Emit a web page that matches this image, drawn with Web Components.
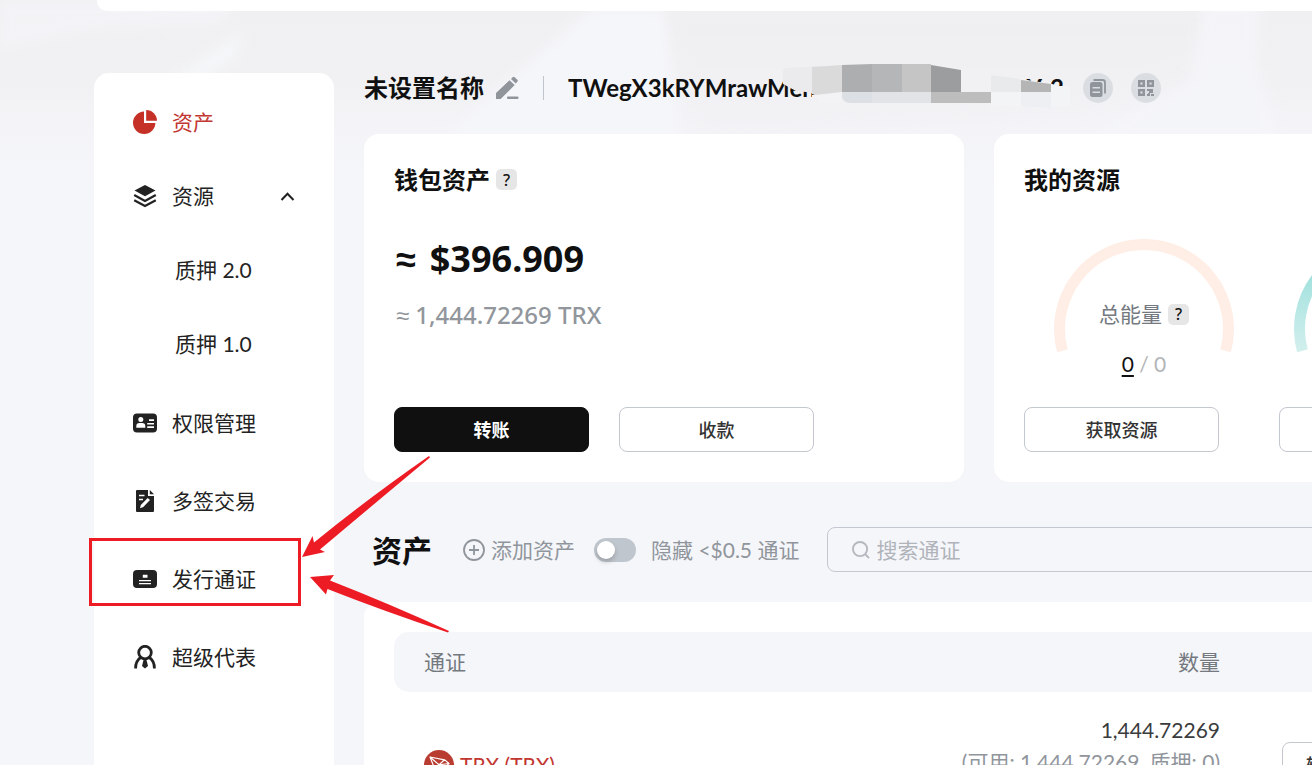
<!DOCTYPE html>
<html lang="zh-CN">
<head>
<meta charset="utf-8">
<meta name="viewport" content="width=device-width, initial-scale=1">
<title>钱包资产</title>
<style>
  html, body { margin: 0; background: #f5f6fa; }
  body { font-family: Lato, "Noto Sans CJK SC", sans-serif; font-size: 21px; line-height: 30px; color: #232323; }
</style>
</head>
<body>
<wallet-page></wallet-page>
<script>
const define = (name, markup) => {
  const tpl = document.createElement('template');
  tpl.innerHTML = markup;
  customElements.define(name, class extends HTMLElement {
    constructor() {
      super();
      this.attachShadow({ mode: 'open' }).append(tpl.content.cloneNode(true));
    }
  });
};

/* Page backdrop: pale folded-paper shapes fading into the page colour */
define('page-backdrop', `
<style>
  :host { position: absolute; inset: 0 0 auto 0; height: 240px; z-index: 0; }
  svg { display: block; width: 100%; height: 100%; }
</style>
<svg viewBox="0 0 1312 240" preserveAspectRatio="none" aria-hidden="true">
  <defs>
    <linearGradient id="f" x1="0" y1="0" x2="0" y2="1">
      <stop offset="0" stop-color="#f0f0f2"/><stop offset=".35" stop-color="#f1f1f3"/>
      <stop offset=".85" stop-color="#f5f6fa" stop-opacity="0"/>
    </linearGradient>
    <linearGradient id="g" x1="0" y1="0" x2="0" y2="1">
      <stop offset="0" stop-color="#efeff1"/><stop offset="1" stop-color="#f3f3f6"/>
    </linearGradient>
    <filter id="b"><feGaussianBlur stdDeviation="6"/></filter>
  </defs>
  <rect width="1312" height="240" fill="url(#f)"/>
  <polygon points="0,0 240,0 220,24 90,30 0,50" fill="#f5f6fa" opacity=".6" filter="url(#b)"/>
  <polygon points="245,30 235,58 200,80 170,80" fill="#f5f7f9" opacity=".9" filter="url(#b)"/>
  <polygon points="590,10 665,10 680,140 440,140 520,70" fill="#f5f6fa" filter="url(#b)"/>
  <polygon points="668,10 1200,10 1200,60 1075,110 700,140 690,100" fill="url(#g)" opacity=".8" filter="url(#b)"/>
  <polygon points="1205,0 1260,0 1256,60 1280,140 1080,140 1190,80" fill="#f5f6fa" opacity=".8" filter="url(#b)"/>
</svg>`);

define('help-badge', `
<style>
  :host { display: inline-flex; }
  button { width: 21px; height: 21px; padding: 0; border: 0; border-radius: 5px; background: #e6e6e6; color: #111; font: 500 16px/20px "Noto Sans", sans-serif; }
</style>
<button type="button" aria-label="说明">?</button>`);

define('action-button', `
<style>
  :host { display: block; width: 195px; flex: none; }
  button { width: 100%; height: 45px; padding: 0; border: 1px solid #c3c7cf; border-radius: 8px; background: #fff; color: #333; font: 500 18px/26px Lato, "Noto Sans CJK SC", sans-serif; }
  :host([primary]) button { background: #101010; border-color: #101010; color: #fff; font-weight: 700; }
</style>
<button type="button"><slot></slot></button>`);

define('panel-card', `
<style>
  :host { display: block; background: #fff; border-radius: 15px; padding: 30px; }
</style>
<slot></slot>`);

/* Menu */
define('menu-item', `
<style>
  :host { display: block; }
  a { display: flex; align-items: center; gap: 15px; height: 78px; padding: 0 39px; color: inherit; text-decoration: none; }
  :host([short]) a { height: 74px; }
  :host([sub]) a { padding-left: 81px; }
  :host([active]) a { color: #c23631; }
  .label { flex: 1; }
  ::slotted(svg) { display: block; flex: none; }
</style>
<a href="#"><slot name="icon"></slot><span class="label"><slot></slot></span><slot name="end"></slot></a>`);

define('side-menu', `
<style>
  :host { display: block; width: 240px; flex: none; background: #fff; border-radius: 15px; }
  nav { padding: 12px 0; }
  .group { padding-bottom: 3px; }
</style>
<nav aria-label="主菜单">
  <div class="group">
    <menu-item short active>
      <svg slot="icon" width="24" height="24" viewBox="0 0 24 24" fill="#c53027"><path d="M11 1.6A11.2 11.2 0 1 0 22.4 13H11Z"/><path d="M13.2 0A10.8 10.8 0 0 1 24 10.8H13.2Z"/></svg>
      资产</menu-item>
    <menu-item short>
      <svg slot="icon" width="24" height="24" viewBox="0 0 24 24"><path d="M12 1 22.500 6.500 12 12.200 1.500 6.500Z" fill="#222"/><path d="M1.200 11 12 17 22.800 11M1.200 16.200 12 22 22.800 16.200" fill="none" stroke="#222" stroke-width="2.200"/></svg>
      资源
      <svg slot="end" width="15" height="15" viewBox="0 0 15 15"><path d="M1.500 11 7.500 4.800 13.500 11" fill="none" stroke="#222" stroke-width="2"/></svg>
    </menu-item>
    <menu-item short sub>质押 2.0</menu-item>
    <menu-item short sub>质押 1.0</menu-item>
  </div>
  <menu-item>
    <svg slot="icon" width="24" height="24" viewBox="0 0 24 24"><rect y="2.500" width="24" height="19" rx="4" fill="#222"/><circle cx="7.800" cy="8.500" r="2.500" fill="#fff"/><path d="M3.300 16.800V15Q3.300 12 6.500 12H9Q12.300 12 12.300 15V16.800ZM16 8.300h5v1.600h-5ZM14.200 11.900H21v1.600h-6.800ZM14.200 15.300H21v1.600h-6.800Z" fill="#fff"/></svg>
    权限管理</menu-item>
  <menu-item>
    <svg slot="icon" width="24" height="24" viewBox="0 0 24 24"><path d="M4 1H15V7H21V22Q21 23 20 23H4Q3 23 3 22V2Q3 1 4 1ZM16.800 1 21 5.200H16.800Z" fill="#222"/><path d="M6 6.500h5.500M6 10.500h4" stroke="#fff" stroke-width="1.500"/><path d="M14.700 9 17 11 10.300 18 7 19.200 7.800 16Z" fill="#fff"/></svg>
    多签交易</menu-item>
  <menu-item>
    <svg slot="icon" width="24" height="24" viewBox="0 0 24 24"><rect y="3" width="24" height="18" rx="4" fill="#222"/><path d="M9.800 7.700h4.700v3H9.800ZM6 13h12v1.300H6ZM6 16h12v1.300H6Z" fill="#fff"/></svg>
    发行通证</menu-item>
  <menu-item>
    <svg slot="icon" width="24" height="24" viewBox="0 0 24 24"><g fill="none" stroke="#222" stroke-width="2.800"><circle cx="12" cy="7.600" r="6.300"/><path d="M7.600 12.500Q2.500 16 2.600 23.500M16.400 12.500Q21.500 16 21.400 23.500"/></g><path d="M11 13h2L15 21 12 23.500 9 21Z" fill="#222"/></svg>
    超级代表</menu-item>
</nav>`);

/* Account line with the masked address */
define('account-bar', `
<style>
  :host { display: flex; align-items: center; height: 30px; font-weight: 700; font-size: 24px; color: #101010; }
  button { border: 0; padding: 0; background: none; display: flex; align-items: center; justify-content: center; }
  .edit { width: 24px; height: 24px; margin-left: 12px; }
  .rule { width: 1px; height: 24px; background: #c0c4cc; margin: 0 24px 0 23px; }
  .address { position: relative; display: flex; justify-content: space-between; width: 496px; height: 30px; }
  .address svg { position: absolute; left: 204px; top: -13px; }
  .actions { display: flex; gap: 18px; margin-left: 19px; }
  .actions button { width: 30px; height: 30px; border-radius: 50%; background: #dadee3; }
</style>
<span>未设置名称</span>
<button class="edit" type="button" aria-label="编辑名称"><svg width="24" height="24" viewBox="0 0 24 24" fill="#90959c"><path d="M0 23V17L13.500 4.200 18.700 9 5.700 22 4.700 23ZM15 2.900 16.600 1.300Q17.600.400 18.700 1.300L21.300 3.700Q22.300 4.700 21.300 5.700L19.700 7.500Z"/><rect x="11" y="20.500" width="11.500" height="2.500" rx="1"/></svg></button>
<span class="rule"></span>
<span class="address"><span>TWegX3kRYMrawMen</span><span>Ys2</span>
  <svg width="300" height="50" viewBox="772 60 300 50" aria-hidden="true">
    <path d="M786 68 820 66V95L806 92 796 91 783 84V70Z" fill="#ebebed"/>
    <path d="M812 95 842 92V102H818V97H812Z" fill="#f3f3f6"/>
    <path d="M812 67 842 65V92L815 95 812 94Z" fill="#dadadb"/>
    <path d="M842 65 872 64V92H842Z" fill="#adaeb0"/>
    <path d="M872 64H902V92H872Z" fill="#b5b6b8"/>
    <path d="M902 64H931V92H902Z" fill="#c5c5c6"/>
    <path d="M931 65 961 70V92H931Z" fill="#9c9d9f"/>
    <path d="M842 92H872V103H851Q844 103 842 98Z" fill="#dce0e5"/>
    <path d="M872 92H931V103H872Z" fill="#e1e3e7"/>
    <path d="M931 92H991V103H931Z" fill="#bdbdbe"/>
    <path d="M991 75 1021 79 1052 84 1056 86H1070V106H991Z" fill="#f3f4f6"/>
    <path d="M991 75 1021 79V92H991Z" fill="#e9eaec"/>
    <path d="M1021 80 1051 84V92H1021Z" fill="#b5b5b6"/>
    <path d="M1021 92H1051V108L1021 106Z" fill="#eeeff2"/>
  </svg>
</span>
<span class="actions">
  <button type="button" aria-label="复制地址"><svg width="16" height="18" viewBox="0 0 16 18"><path d="M3.500 1h9Q15 1 15 3.500V14.500" fill="none" stroke="#8f959b" stroke-width="1.800"/><rect y="3" width="12.500" height="15" rx="2.500" fill="#8f959b"/><path d="M2.500 8.800h7.500M2.500 13.200h7.500" stroke="#dadee3" stroke-width="1.600"/></svg></button>
  <button type="button" aria-label="地址二维码"><svg width="16" height="16" viewBox="0 0 16 16" fill="none" stroke="#8f959b" stroke-width="2.400"><path d="M1.200 1.200h4.600v4.600H1.200ZM10.200 1.200h4.600v4.600h-4.600ZM1.200 10.200h4.600v4.600H1.200Z"/><path d="M9 10h3v2h2v-3M9 15h2v-2M13 15h3" stroke-width="2"/></svg></button>
</span>`);

define('wallet-summary', `
<style>
  :host { display: flex; flex-direction: column; height: 288px; }
  h2 { display: flex; align-items: center; gap: 6px; margin: 0; font-size: 24px; line-height: 32px; font-weight: 700; color: #101010; height: 31px; }
  p { display: flex; margin: 0; padding-left: 2px; font-family: "Noto Sans", sans-serif; }
  .fiat { gap: 14px; margin-top: 38px; font-size: 36px; line-height: 52px; font-weight: 700; color: #101010; }
  .trx { gap: 6px; margin-top: 13px; font-size: 24px; line-height: 34px; font-weight: 500; color: #91969c; }
  .actions { display: flex; gap: 30px; margin-top: auto; }
</style>
<h2>钱包资产 <help-badge></help-badge></h2>
<p class="fiat"><span>≈</span><span>$396.909</span></p>
<p class="trx"><span>≈</span><span>1,444.72269 TRX</span></p>
<div class="actions"><action-button primary>转账</action-button><action-button>收款</action-button></div>`);

/* Dial; --arc-from and --arc-to set its colours from top to bottom */
define('resource-gauge', `
<style>
  :host { display: grid; width: 240px; height: 150px; flex: none; }
  svg { grid-area: 1 / 1; justify-self: center; }
  .from { stop-color: var(--arc-from, #ffeee6); }
  .to { stop-color: var(--arc-to, #ffeee6); }
  .text { grid-area: 1 / 1; display: flex; flex-direction: column; align-items: center; gap: 20px; padding-top: 60px; }
  .name { display: flex; align-items: center; gap: 6px; color: #74797f; }
  .value { color: #b3b5b8; }
  a { color: #101010; text-decoration-thickness: 2px; text-underline-offset: 3px; }
</style>
<svg width="180" height="120" viewBox="0 0 180 120" aria-hidden="true">
  <defs><linearGradient id="t" x1="0" y1="0" x2="0" y2="1"><stop class="from" offset="0"/><stop class="to" offset="1"/></linearGradient></defs>
  <path d="M8.400 111.900A84.500 84.500 0 1 1 171.600 111.900" fill="none" stroke="url(#t)" stroke-width="11"/>
</svg>
<div class="text"><span class="name"><slot></slot><help-badge></help-badge></span><span class="value"><a href="#">0</a> / 0</span></div>`);

define('resource-summary', `
<style>
  :host { display: flex; flex-direction: column; height: 288px; }
  h2 { margin: 0; font-size: 24px; line-height: 32px; font-weight: 700; color: #101010; }
  .gauges { display: flex; margin-top: 43px; }
  .bandwidth { --arc-from: #8fdcd8; --arc-to: #d2efed; }
  .actions { display: flex; gap: 60px; margin-top: auto; }
</style>
<h2>我的资源</h2>
<div class="gauges"><resource-gauge>总能量</resource-gauge><resource-gauge class="bandwidth">总带宽</resource-gauge></div>
<div class="actions"><action-button>获取资源</action-button><action-button>获取资源</action-button></div>`);

define('asset-toolbar', `
<style>
  :host { display: flex; align-items: center; height: 45px; color: #90959c; white-space: nowrap; }
  h2 { margin: 0 31px 0 8px; font-size: 30px; line-height: 44px; font-weight: 700; color: #101010; }
  button { display: flex; align-items: center; gap: 6px; border: 0; padding: 0; background: none; color: inherit; font: inherit; }
  label.hide { display: flex; align-items: center; gap: 15px; margin: 0 28px 0 19px; }
  input[type=checkbox] { appearance: none; display: flex; align-items: center; width: 42px; height: 24px; margin: 0; padding: 0 3px; border-radius: 12px; background: #c0c6cd; }
  input[type=checkbox]::before { content: ""; width: 18px; height: 18px; border-radius: 50%; background: #fff; box-shadow: 0 3px 5px #0003; }
  .search { display: flex; align-items: center; gap: 6px; flex: 1; height: 43px; padding: 0 24px; border: 1px solid #c3c7cf; border-radius: 8px; }
  .search input { flex: 1; min-width: 0; border: 0; padding: 0; background: none; font: inherit; outline: 0; }
  .search input::placeholder { color: #b0b4ba; opacity: 1; }
</style>
<h2>资产</h2>
<button type="button"><svg width="22" height="22" viewBox="0 0 22 22" fill="none" stroke="#90959c" stroke-width="1.800"><circle cx="11" cy="11" r="10"/><path d="M11 6v10M6 11h10"/></svg>添加资产</button>
<label class="hide"><input type="checkbox" role="switch"><span>隐藏 &lt;$0.5 通证</span></label>
<label class="search"><svg width="18" height="18" viewBox="0 0 19 19" fill="none" stroke="#b5b9bf" stroke-width="2"><circle cx="8.500" cy="8.500" r="7.500"/><path d="M14 14 18 18"/></svg><input type="search" aria-label="搜索通证" placeholder="搜索通证"></label>`);

define('token-table', `
<style>
  :host { display: block; }
  table { width: 100%; border-collapse: separate; border-spacing: 0; table-layout: fixed; }
  .c1 { width: 300px; } .c2 { width: 526px; }
  th { height: 60px; padding: 0; background: #f5f6fa; color: #74797f; font-weight: 400; text-align: left; line-height: 30px; }
  th:first-child { border-radius: 15px 0 0 15px; padding-left: 30px; }
  th:last-child { border-radius: 0 15px 15px 0; }
  th.amount, td.amount { text-align: right; }
  td { vertical-align: top; padding: 0; height: 146px; white-space: nowrap; }
  td.token { padding: 58px 0 0 30px; }
  td.amount { padding-top: 22px; line-height: 32px; color: #3a3b3d; }
  td.amount small { display: block; font-size: 21px; color: #90959c; }
  td.act { padding: 50px 0 0 62px; }
  a { display: flex; align-items: center; gap: 6px; color: #c23631; text-decoration: none; }
  a span { line-height: 26px; }
  .narrow { width: 84px; }
</style>
<table>
  <colgroup><col class="c1"><col class="c2"><col></colgroup>
  <thead><tr><th scope="col">通证</th><th scope="col" class="amount">数量</th><th scope="col"></th></tr></thead>
  <tbody><tr>
    <td class="token"><a href="#"><svg width="30" height="30" viewBox="0 0 30 30"><circle cx="15" cy="15" r="15" fill="#b93c31"/><path d="M6 7 20.500 9.800 25 13.500 13.500 26ZM6 7 15 14.800 13.500 26M15 14.800 25 13.500M15 14.800 20.500 9.800" fill="none" stroke="#fff" stroke-width="1.200" stroke-linejoin="round"/></svg><span>TRX (TRX)</span></a></td>
    <td class="amount">1,444.72269<small>(可用: 1,444.72269, 质押: 0)</small></td>
    <td class="act"><action-button class="narrow">转账</action-button></td>
  </tr></tbody>
</table>`);

/* Red box and arrows drawn over the page */
define('callout-marks', `
<style>
  :host { position: absolute; left: 80px; top: 440px; width: 400px; height: 210px; pointer-events: none; z-index: 3; }
  svg { display: block; }
</style>
<svg width="400" height="210" viewBox="80 440 400 210" fill="#ed1c24" aria-hidden="true">
  <rect x="90.500" y="539.500" width="209" height="65" fill="none" stroke="#ed1c24" stroke-width="3"/>
  <path d="M302 557 312.500 536 314 542.500Q366 500 429 456L430 457.500Q374 504 320 549.500L325 552Z"/>
  <path d="M310 577 334 575 330 580.500Q390 604 449 631L448 632.500Q386 612 327.500 589L326 594.500Z"/>
</svg>`);

define('wallet-page', `
<style>
  :host { display: block; position: relative; height: 100vh; overflow: hidden; background: #f5f6fa; }
  .topbar { position: relative; height: 11px; margin-left: 97px; background: #fff; border-radius: 0 0 0 10px; }
  .layout { position: relative; display: flex; gap: 30px; margin-top: 62px; padding-left: 94px; min-height: calc(100vh - 73px); }
  main { flex: 1 0 1230px; }
  .cards { display: grid; grid-template-columns: 600px minmax(600px, 1fr); gap: 30px; margin: 31px 0 45px; }
  .tokens { margin-top: 30px; }
</style>
<page-backdrop></page-backdrop>
<div class="topbar"></div>
<div class="layout">
  <side-menu></side-menu>
  <main>
    <account-bar></account-bar>
    <div class="cards">
      <panel-card><wallet-summary></wallet-summary></panel-card>
      <panel-card><resource-summary></resource-summary></panel-card>
    </div>
    <asset-toolbar></asset-toolbar>
    <panel-card class="tokens"><token-table></token-table></panel-card>
  </main>
</div>
<callout-marks></callout-marks>`);
</script>
</body>
</html>
